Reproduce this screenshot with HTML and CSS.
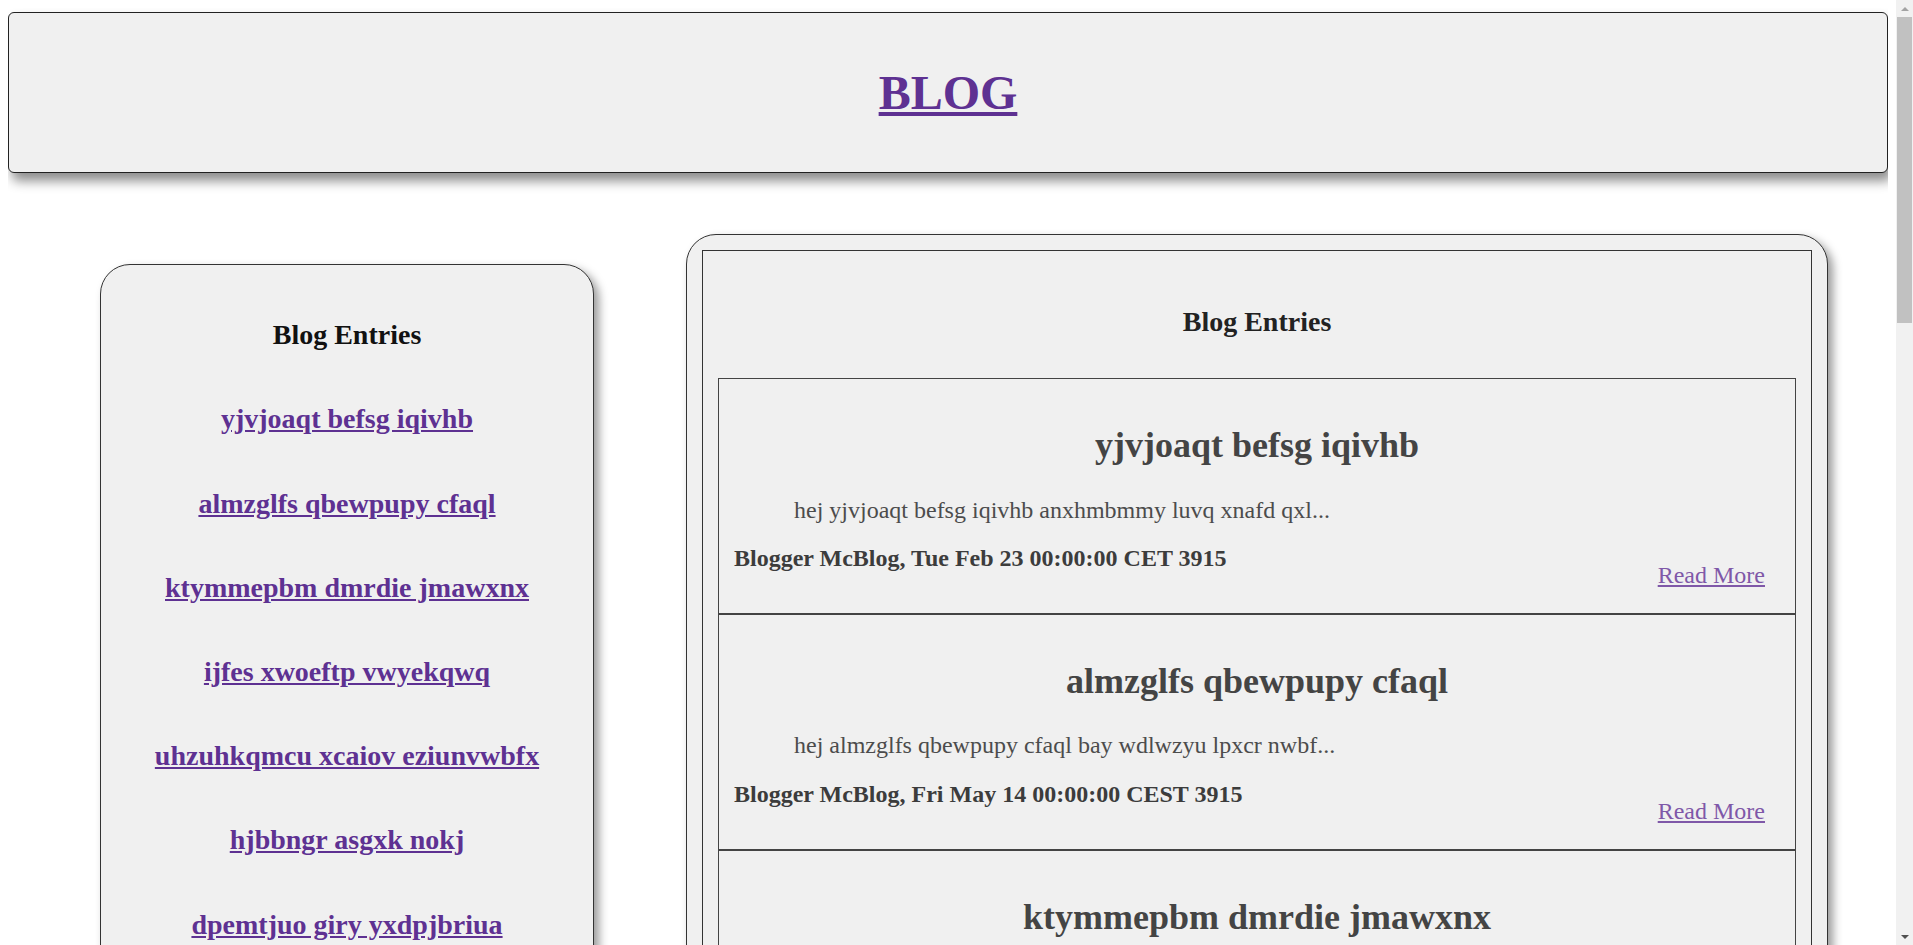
FILE: index.html
```html
<!DOCTYPE html>
<html lang="en">
<head>
<meta charset="utf-8">
<title>BLOG</title>
<link rel="stylesheet" href="styles.css">
</head>
<body>
<header class="site-header">
  <h1 class="site-title"><a href="#">BLOG</a></h1>
</header>
<div class="layout">
  <aside class="sidebar">
    <h3 class="panel-title">Blog Entries</h3>
    <h3 class="side-link"><a href="#">yjvjoaqt befsg iqivhb</a></h3>
    <h3 class="side-link"><a href="#">almzglfs qbewpupy cfaql</a></h3>
    <h3 class="side-link"><a href="#">ktymmepbm dmrdie jmawxnx</a></h3>
    <h3 class="side-link"><a href="#">ijfes xwoeftp vwyekqwq</a></h3>
    <h3 class="side-link"><a href="#">uhzuhkqmcu xcaiov eziunvwbfx</a></h3>
    <h3 class="side-link"><a href="#">hjbbngr asgxk nokj</a></h3>
    <h3 class="side-link"><a href="#">dpemtjuo giry yxdpjbriua</a></h3>
    <h3 class="side-link"><a href="#">rqonvle tsakbw fhygz</a></h3>
    <h3 class="side-link"><a href="#">wexqblo mvuzt pacndr</a></h3>
    <h3 class="side-link"><a href="#">zoktyer bnlqa uwsiev</a></h3>
  </aside>
  <main class="main">
    <div class="frame">
      <h3 class="main-title">Blog Entries</h3>
      <article class="entry">
        <h2 class="entry-title">yjvjoaqt befsg iqivhb</h2>
        <p class="excerpt">hej yjvjoaqt befsg iqivhb anxhmbmmy luvq xnafd qxl...</p>
        <div class="entry-foot"><p class="author">Blogger McBlog, Tue Feb 23 00:00:00 CET 3915</p><a class="read-more" href="#">Read More</a></div>
      </article>
      <article class="entry">
        <h2 class="entry-title">almzglfs qbewpupy cfaql</h2>
        <p class="excerpt">hej almzglfs qbewpupy cfaql bay wdlwzyu lpxcr nwbf...</p>
        <div class="entry-foot"><p class="author">Blogger McBlog, Fri May 14 00:00:00 CEST 3915</p><a class="read-more" href="#">Read More</a></div>
      </article>
      <article class="entry">
        <h2 class="entry-title">ktymmepbm dmrdie jmawxnx</h2>
        <p class="excerpt">hej ktymmepbm dmrdie jmawxnx ovtq zkeyr bmlsa qiu...</p>
        <div class="entry-foot"><p class="author">Blogger McBlog, Mon Aug 09 00:00:00 CEST 3915</p><a class="read-more" href="#">Read More</a></div>
      </article>
      <article class="entry">
        <h2 class="entry-title">ijfes xwoeftp vwyekqwq</h2>
        <p class="excerpt">hej ijfes xwoeftp vwyekqwq ralpm yoxd hunbe tkw...</p>
        <div class="entry-foot"><p class="author">Blogger McBlog, Thu Oct 21 00:00:00 CEST 3915</p><a class="read-more" href="#">Read More</a></div>
      </article>
      <article class="entry">
        <h2 class="entry-title">uhzuhkqmcu xcaiov eziunvwbfx</h2>
        <p class="excerpt">hej uhzuhkqmcu xcaiov eziunvwbfx pemg lrast vuoy...</p>
        <div class="entry-foot"><p class="author">Blogger McBlog, Sat Dec 04 00:00:00 CET 3915</p><a class="read-more" href="#">Read More</a></div>
      </article>
      <article class="entry">
        <h2 class="entry-title">hjbbngr asgxk nokj</h2>
        <p class="excerpt">hej hjbbngr asgxk nokj wufemz cdpi tholyx ren...</p>
        <div class="entry-foot"><p class="author">Blogger McBlog, Wed Jan 19 00:00:00 CET 3916</p><a class="read-more" href="#">Read More</a></div>
      </article>
      <article class="entry">
        <h2 class="entry-title">dpemtjuo giry yxdpjbriua</h2>
        <p class="excerpt">hej dpemtjuo giry yxdpjbriua klosv menh qatbz iwo...</p>
        <div class="entry-foot"><p class="author">Blogger McBlog, Tue Mar 08 00:00:00 CET 3916</p><a class="read-more" href="#">Read More</a></div>
      </article>
      <article class="entry">
        <h2 class="entry-title">rqonvle tsakbw fhygz</h2>
        <p class="excerpt">hej rqonvle tsakbw fhygz dimwo plaex jurt sazq...</p>
        <div class="entry-foot"><p class="author">Blogger McBlog, Fri Apr 22 00:00:00 CEST 3916</p><a class="read-more" href="#">Read More</a></div>
      </article>
      <article class="entry">
        <h2 class="entry-title">wexqblo mvuzt pacndr</h2>
        <p class="excerpt">hej wexqblo mvuzt pacndr hiyfo tuleq bawnk oze...</p>
        <div class="entry-foot"><p class="author">Blogger McBlog, Sun Jun 12 00:00:00 CEST 3916</p><a class="read-more" href="#">Read More</a></div>
      </article>
      <article class="entry">
        <h2 class="entry-title">zoktyer bnlqa uwsiev</h2>
        <p class="excerpt">hej zoktyer bnlqa uwsiev gmarp xiodt yefl kunh...</p>
        <div class="entry-foot"><p class="author">Blogger McBlog, Mon Aug 01 00:00:00 CEST 3916</p><a class="read-more" href="#">Read More</a></div>
      </article>
    </div>
  </main>
</div>
<div class="scrollbar" aria-hidden="true">
  <span class="sb-arrow sb-up"></span>
  <span class="sb-thumb"></span>
  <span class="sb-track"></span>
  <span class="sb-arrow sb-down"></span>
</div>
</body>
</html>
```

FILE: styles.css
```css
html {
  background: #ffffff;
}

body {
  margin: 8px 25px 8px 8px;
  font-family: "Liberation Serif", "Times New Roman", serif;
  font-size: 24px;
  line-height: 1.15;
  color: #000;
  background: #ffffff;
}

.site-header {
  margin-top: 4px;
  padding: 20px;
  background: #f0f0f0;
  border: 1px solid #222;
  border-radius: 6px;
  box-shadow: 4px 8px 12px rgba(0, 0, 0, 0.45);
  text-align: center;
}

.site-title {
  margin: 32px 0;
  font-size: 48px;
  font-weight: bold;
  line-height: 1.15;
}

.site-title a {
  color: #5e3192;
}

.layout {
  display: flex;
  align-items: flex-start;
  gap: 92px;
  padding-left: 92px;
  margin-top: 61px;
}

.sidebar {
  box-sizing: border-box;
  width: 494px;
  flex: none;
  margin-top: 30px;
  padding: 54px 20px;
  background: #f0f0f0;
  border: 1px solid #333;
  border-radius: 30px;
  box-shadow: 5px 5px 10px rgba(0, 0, 0, 0.4);
  display: flex;
  flex-direction: column;
  gap: 52px;
  text-align: center;
}

.panel-title {
  margin: 0;
  font-size: 28px;
  font-weight: bold;
  color: #111;
}

.side-link {
  margin: 0;
  font-size: 28px;
  font-weight: bold;
}

.side-link a {
  color: #5e3192;
}

.main {
  box-sizing: border-box;
  width: 1142px;
  flex: none;
  padding: 15px;
  background: #f0f0f0;
  border: 1px solid #333;
  border-radius: 30px;
  box-shadow: 5px 5px 10px rgba(0, 0, 0, 0.4);
}

.frame {
  padding: 15px;
  border: 1px solid #333;
}

.main-title {
  margin: 40px 0;
  font-size: 28px;
  font-weight: bold;
  text-align: center;
  color: #222;
}

.entry {
  padding: 16px 15px;
  border: 1px solid #444;
  color: #444;
}

.entry-title {
  margin: 30px 0;
  font-size: 36px;
  font-weight: bold;
  text-align: center;
  color: #444;
}

.excerpt {
  margin: 0;
  padding-left: 60px;
  color: #4c4c4c;
}

.entry-foot {
  display: flex;
  justify-content: space-between;
  align-items: flex-start;
}

.author {
  margin: 21px 0 24px;
  font-weight: bold;
  color: #3c3c3c;
}

.read-more {
  margin: 38px 15px 0 0;
  color: #7f58a8;
}

/* classic scrollbar drawn over the right edge of the window */
.scrollbar {
  position: fixed;
  top: 0;
  right: 0;
  width: 17px;
  height: 100vh;
  background: #f1f1f1;
  display: flex;
  flex-direction: column;
  align-items: center;
}

.sb-arrow {
  flex: none;
  width: 17px;
  height: 17px;
  display: flex;
  align-items: center;
  justify-content: center;
}

.sb-arrow::before {
  content: "";
  width: 0;
  height: 0;
  border-left: 4px solid transparent;
  border-right: 4px solid transparent;
}

.sb-up::before {
  border-bottom: 4px solid #a3a3a3;
}

.sb-down::before {
  border-top: 4px solid #505050;
}

.sb-thumb {
  flex: none;
  width: 15px;
  height: 306px;
  background: #c1c1c1;
}

.sb-track {
  flex: 1;
}
```
